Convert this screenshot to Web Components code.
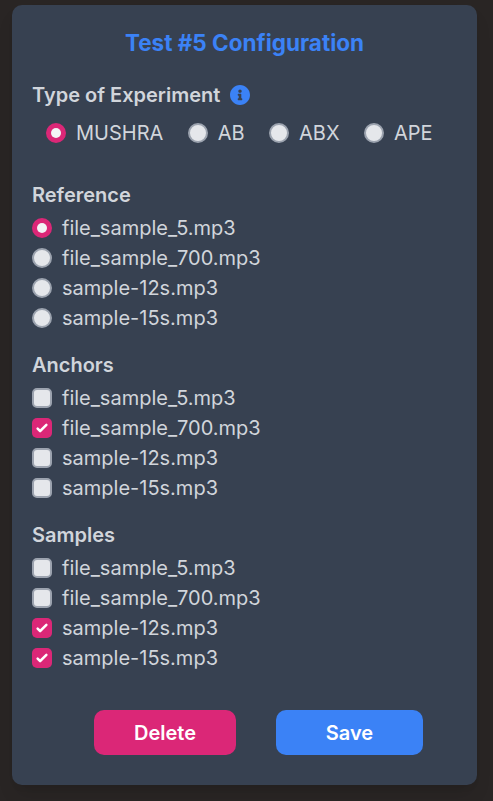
<!DOCTYPE html>
<html lang="en">
<head>
<meta charset="utf-8">
<title>Test #5 Configuration</title>
<style>
html, body { margin: 0; height: 100%; background: #292524; }
body { font: 400 20px/30px Inter, sans-serif; color: #d1d5db; box-sizing: border-box; padding: 5px 16px 16px 12px; overflow: hidden; }
</style>
</head>
<body>
<config-card heading="Test #5 Configuration">
  <option-group label="Type of Experiment" info row>
    <option-item checked>MUSHRA</option-item>
    <option-item>AB</option-item>
    <option-item>ABX</option-item>
    <option-item>APE</option-item>
  </option-group>
  <option-group label="Reference">
    <option-item checked>file_sample_5.mp3</option-item>
    <option-item>file_sample_700.mp3</option-item>
    <option-item>sample-12s.mp3</option-item>
    <option-item>sample-15s.mp3</option-item>
  </option-group>
  <option-group label="Anchors">
    <option-item type="checkbox">file_sample_5.mp3</option-item>
    <option-item type="checkbox" checked>file_sample_700.mp3</option-item>
    <option-item type="checkbox">sample-12s.mp3</option-item>
    <option-item type="checkbox">sample-15s.mp3</option-item>
  </option-group>
  <option-group label="Samples">
    <option-item type="checkbox">file_sample_5.mp3</option-item>
    <option-item type="checkbox">file_sample_700.mp3</option-item>
    <option-item type="checkbox" checked>sample-12s.mp3</option-item>
    <option-item type="checkbox" checked>sample-15s.mp3</option-item>
  </option-group>
  <action-button slot="actions" style="--w:142px;--bg:#db2777">Delete</action-button>
  <action-button slot="actions" style="--w:147px;--bg:#3b82f6">Save</action-button>
</config-card>
<script>
class Base extends HTMLElement {
  constructor() {
    super();
    this.attachShadow({ mode: 'open' });
  }
  connectedCallback() { this.shadowRoot.innerHTML = this.view(); }
}

customElements.define('config-card', class extends Base {
  view() {
    return `<style>
      :host { display: flex; flex-direction: column; box-sizing: border-box; width: 465px; height: 780px; padding: 20px;
        border-radius: 10px; background: #374151; box-shadow: 0 12px 19px -4px rgba(0,0,0,.1), 0 5px 8px -5px rgba(0,0,0,.1); }
      h1 { margin: 0 0 20px; padding: 3px 0 2px; text-align: center; font-size: 22.5px; line-height: 30px; font-weight: 700; color: #3b82f6; }
      .groups { display: flex; flex-direction: column; gap: 17px; }
      footer { display: flex; gap: 40px; margin: 37px 0 0 62px; }
    </style>
    <h1>${this.getAttribute('heading')}</h1>
    <div class="groups"><slot></slot></div>
    <footer><slot name="actions"></slot></footer>`;
  }
});

customElements.define('option-group', class extends Base {
  view() {
    const info = this.hasAttribute('info') ? '<info-icon></info-icon>' : '';
    return `<style>
      :host { display: block; }
      .label { display: flex; align-items: center; gap: 10px; font-weight: 600; margin-bottom: 3px; }
      .items { display: flex; flex-direction: column; }
      :host([row]) .label { margin-bottom: 8px; }
      :host([row]) .items { flex-direction: row; gap: 24.4px; padding: 0 0 15px 14px; }
    </style>
    <div class="label"><span>${this.getAttribute('label')}</span>${info}</div>
    <div class="items"><slot></slot></div>`;
  }
});

customElements.define('info-icon', class extends Base {
  view() {
    return `<style>:host { display: block; width: 20px; height: 20px; color: #3b82f6; } svg { display: block; }</style>
    <svg width="20" height="20" viewBox="8 8 496 496" fill="currentColor"><path d="M256 8C119.043 8 8 119.083 8 256c0 136.997 111.043 248 248 248s248-111.003 248-248C504 119.083 392.957 8 256 8zm0 110c23.196 0 42 18.804 42 42s-18.804 42-42 42-42-18.804-42-42 18.804-42 42-42zm56 254c0 6.627-5.373 12-12 12h-88c-6.627 0-12-5.373-12-12v-24c0-6.627 5.373-12 12-12h12v-64h-12c-6.627 0-12-5.373-12-12v-24c0-6.627 5.373-12 12-12h64c6.627 0 12 5.373 12 12v100h12c6.627 0 12 5.373 12 12v24z"/></svg>`;
  }
});

customElements.define('option-item', class extends Base {
  view() {
    const box = this.getAttribute('type') === 'checkbox';
    const on = this.hasAttribute('checked');
    const mark = !on ? '' : box
      ? '<svg width="20" height="20" viewBox="0 0 16 16" fill="#fff"><path d="M12.207 4.793a1 1 0 0 1 0 1.414l-5 5a1 1 0 0 1-1.414 0l-2-2a1 1 0 0 1 1.414-1.414L6.5 9.086l4.293-4.293a1 1 0 0 1 1.414 0z"/></svg>'
      : '<i></i>';
    return `<style>
      :host { display: flex; align-items: center; gap: 10px; white-space: nowrap; }
      .control { display: grid; place-items: center; box-sizing: border-box; flex: none; width: 20px; height: 20px; border: 2px solid #9ca3af; background: #e5e7eb; border-radius: ${box ? '5px' : '50%'}; }
      .on { border: 0; background: #db2777; }
      i { width: 10px; height: 10px; border-radius: 50%; background: #f3f4f6; }
      svg { display: block; }
    </style>
    <span class="control ${on ? 'on' : ''}">${mark}</span><span><slot></slot></span>`;
  }
});

customElements.define('action-button', class extends Base {
  view() {
    return `<style>
      :host { display: block; }
      button { display: block; width: var(--w); height: 45px; border: 0; padding: 0; border-radius: 10px; background: var(--bg); color: #fff; font: inherit; font-weight: 600; }
    </style><button><slot></slot></button>`;
  }
});
</script>
</body>
</html>
